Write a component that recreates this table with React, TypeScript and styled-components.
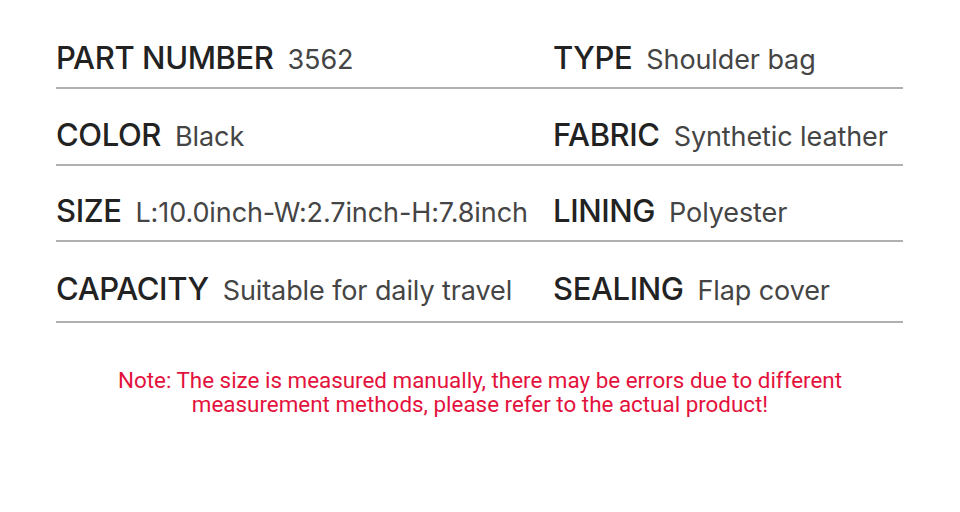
import React from "react";
import styled, { createGlobalStyle } from "styled-components";

const Global = createGlobalStyle`
  html, body { margin: 0; padding: 0; background: #fff; }
  body { width: 960px; height: 512px; overflow: hidden; }
`;

const Page = styled.div`
  width: 960px;
  height: 512px;
  background: #fff;
  padding-top: 11px;
  box-sizing: border-box;
`;

const Table = styled.div`
  margin-left: 56px;
  width: 847px;
  display: flex;
  flex-direction: column;
`;

const Row = styled.div<{ $h: number }>`
  height: ${(p) => p.$h}px;
  display: grid;
  grid-template-columns: 497px 1fr;
  align-items: end;
  border-bottom: 2px solid #b0b0b0;
  box-sizing: border-box;
`;

const Cell = styled.div<{ $pb: number }>`
  display: flex;
  align-items: baseline;
  white-space: nowrap;
  padding-bottom: ${(p) => p.$pb}px;
  font-family: Inter, "Noto Sans", sans-serif;
`;

const Label = styled.span`
  font-size: 31px;
  font-weight: 500;
  color: #222;
  letter-spacing: -0.4px;
  margin-right: 14px;
`;

const Value = styled.span`
  font-size: 27px;
  font-weight: 400;
  color: #454545;
  letter-spacing: -0.1px;
`;

const Note = styled.p`
  margin: 45px 0 0;
  text-align: center;
  font-family: Roboto, "Liberation Sans", sans-serif;
  font-size: 22.4px;
  line-height: 24px;
  color: #e3123d;
`;

const rows: { h: number; pb: number; cells: [string, string][] }[] = [
  { h: 78, pb: 11, cells: [["PART NUMBER", "3562"], ["TYPE", "Shoulder bag"]] },
  { h: 77, pb: 11, cells: [["COLOR", "Black"], ["FABRIC", "Synthetic leather"]] },
  { h: 76, pb: 11, cells: [["SIZE", "L:10.0inch-W:2.7inch-H:7.8inch"], ["LINING", "Polyester"]] },
  { h: 81, pb: 14, cells: [["CAPACITY", "Suitable for daily travel"], ["SEALING", "Flap cover"]] },
];

export default function App() {
  return (
    <>
      <Global />
      <Page>
        <Table>
          {rows.map((r, i) => (
            <Row key={i} $h={r.h}>
              {r.cells.map(([l, v]) => (
                <Cell key={l} $pb={r.pb}>
                  <Label>{l}</Label>
                  <Value>{v}</Value>
                </Cell>
              ))}
            </Row>
          ))}
        </Table>
        <Note>
          Note: The size is measured manually, there may be errors due to different
          <br />
          measurement methods, please refer to the actual product!
        </Note>
      </Page>
    </>
  );
}
